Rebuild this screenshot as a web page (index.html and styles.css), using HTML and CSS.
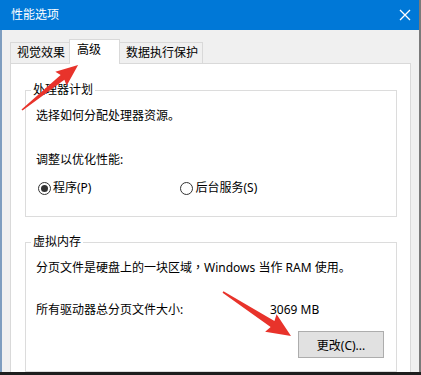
FILE: index.html
```html
<!DOCTYPE html>
<html lang="zh-CN">
<head>
<meta charset="utf-8">
<title>性能选项</title>
<link rel="stylesheet" href="styles.css">
</head>
<body>
<div class="window">
  <div class="titlebar">
    <span class="title">性能选项</span>
    <svg class="close" width="12" height="12" viewBox="0 0 12 12"><path d="M1 1 L11 11 M11 1 L1 11" stroke="#fff" stroke-width="1.3" fill="none"/></svg>
  </div>
  <div class="client">
    <div class="tabs">
      <div class="tab">视觉效果</div>
      <div class="tab active">高级</div>
      <div class="tab">数据执行保护</div>
    </div>
    <div class="panel">
      <fieldset class="group group-cpu">
        <legend>处理器计划</legend>
        <p class="line first">选择如何分配处理器资源。</p>
        <p class="line adjust">调整以优化性能:</p>
        <div class="radios">
          <label class="radio"><span class="dot checked"></span>程序(P)</label>
          <label class="radio second"><span class="dot"></span>后台服务(S)</label>
        </div>
      </fieldset>
      <fieldset class="group group-mem">
        <legend>虚拟内存</legend>
        <p class="line first">分页文件是硬盘上的一块区域<span class="comma" lang="zh-TW">，</span>Windows 当作 RAM 使用。</p>
        <div class="size-row">
          <span>所有驱动器总分页文件大小:</span>
          <span>3069 MB</span>
        </div>
        <div class="btn-row"><button class="btn">更改(C)...</button></div>
      </fieldset>
    </div>
  </div>
  <svg class="arrows" width="421" height="375" viewBox="0 0 421 375">
    <polygon fill="#e8332b" transform="translate(22,110) rotate(-38.8)" points="0,-0.8 52,-3 50,-9 72,0 50,9 52,3 0,0.8"/>
    <polygon fill="#e8332b" transform="translate(223,292) rotate(32.9)" points="0,-0.8 59,-3.5 57,-10.5 81,0 57,10.5 59,3.5 0,0.8"/>
  </svg>
</div>
</body>
</html>
```

FILE: styles.css
```css
html, body {
  margin: 0;
  padding: 0;
  background: #1e1e1e;
}
body {
  width: 421px;
  height: 375px;
  overflow: hidden;
  font-family: "Noto Sans", "Noto Sans CJK SC", sans-serif;
  font-size: 12px;
  color: #000;
}
.window {
  position: relative;
  width: 421px;
  height: 372px;
  overflow: hidden;
  background: #f0f0f0;
  box-sizing: border-box;
  border-right: 2px solid #7a7a7a;
}
.titlebar {
  height: 30px;
  background: #0078d7;
  display: flex;
  align-items: center;
  justify-content: space-between;
  padding: 0 8px 0 11px;
  color: #fff;
}
.title {
  font-size: 12px;
  line-height: 16px;
}
.close {
  display: block;
}
.client {
  padding: 9px 8px 0 8px;
  border-left: 2px solid #7e9dbf;
  height: 342px;
  box-sizing: border-box;
}
.tabs {
  display: flex;
  align-items: flex-end;
  height: 24px;
}
.tab {
  height: 21px;
  box-sizing: border-box;
  border: 1px solid #d9d9d9;
  border-bottom: none;
  padding: 0 4px 0 6px;
  line-height: 19px;
  background: #f0f0f0;
  margin-right: -1px;
}
.tab.active {
  height: 25px;
  margin-bottom: -1px;
  background: #fff;
  position: relative;
  z-index: 1;
  padding: 0 18px 0 7px;
  line-height: 20px;
}
.panel {
  background: #fff;
  border: 1px solid #d9d9d9;
  border-bottom: none;
  padding: 18px 13px 0 14px;
  height: 320px;
}
.group {
  margin: 0;
  border: 1px solid #dcdcdc;
  padding: 0 12px 0 10px;
}
.group legend {
  padding: 0 2px;
  margin-left: -5px;
  line-height: 16px;
}
.line {
  margin: 0;
  line-height: 16px;
}
.comma {
  font-family: "Noto Sans CJK TC", sans-serif;
}
.line.first {
  margin-top: 10px;
}
.line.adjust {
  margin-top: 28px;
}
.group-cpu {
  padding-bottom: 20px;
}
.radios {
  display: flex;
  margin-top: 12px;
  line-height: 16px;
}
.radio {
  display: flex;
  align-items: center;
  gap: 2px;
  margin-left: 2px;
}
.radio.second {
  margin-left: 89px;
}
.dot {
  width: 13px;
  height: 13px;
  box-sizing: border-box;
  border: 1px solid #333;
  border-radius: 50%;
  display: inline-flex;
  align-items: center;
  justify-content: center;
}
.dot.checked::after {
  content: "";
  width: 7px;
  height: 7px;
  border-radius: 50%;
  background: #333;
}
.group-mem {
  margin-top: 17px;
  padding-bottom: 13px;
}
.group-mem .line.first {
  margin-top: 9px;
}
.size-row {
  display: grid;
  grid-template-columns: 234px auto;
  margin-top: 26px;
  line-height: 16px;
}
.btn-row {
  display: flex;
  justify-content: flex-end;
  margin-top: 13px;
}
.btn {
  width: 86px;
  height: 27px;
  background: #e1e1e1;
  border: 1px solid #adadad;
  font-family: "Noto Sans", "Noto Sans CJK SC", sans-serif;
  font-size: 12px;
  color: #000;
  padding: 0;
}
.arrows {
  position: absolute;
  left: 0;
  top: 0;
  pointer-events: none;
}
```
